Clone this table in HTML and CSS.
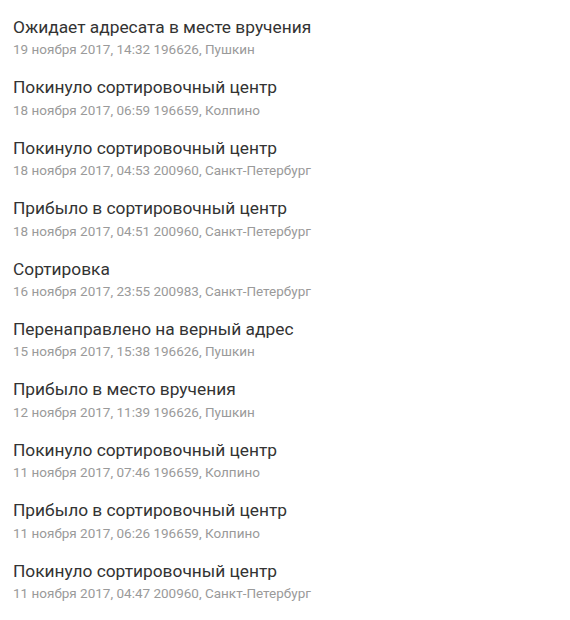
FILE: index.html
```html
<!DOCTYPE html>
<html lang="ru">
<head>
<meta charset="utf-8">
<link rel="stylesheet" href="styles.css">
</head>
<body>
<ul class="history">
  <li class="event"><div class="title">Ожидает адресата в месте вручения</div><div class="meta">19 ноября 2017, 14:32 196626, Пушкин</div></li>
  <li class="event"><div class="title">Покинуло сортировочный центр</div><div class="meta">18 ноября 2017, 06:59 196659, Колпино</div></li>
  <li class="event"><div class="title">Покинуло сортировочный центр</div><div class="meta">18 ноября 2017, 04:53 200960, Санкт-Петербург</div></li>
  <li class="event"><div class="title">Прибыло в сортировочный центр</div><div class="meta">18 ноября 2017, 04:51 200960, Санкт-Петербург</div></li>
  <li class="event"><div class="title">Сортировка</div><div class="meta">16 ноября 2017, 23:55 200983, Санкт-Петербург</div></li>
  <li class="event"><div class="title">Перенаправлено на верный адрес</div><div class="meta">15 ноября 2017, 15:38 196626, Пушкин</div></li>
  <li class="event"><div class="title">Прибыло в место вручения</div><div class="meta">12 ноября 2017, 11:39 196626, Пушкин</div></li>
  <li class="event"><div class="title">Покинуло сортировочный центр</div><div class="meta">11 ноября 2017, 07:46 196659, Колпино</div></li>
  <li class="event"><div class="title">Прибыло в сортировочный центр</div><div class="meta">11 ноября 2017, 06:26 196659, Колпино</div></li>
  <li class="event"><div class="title">Покинуло сортировочный центр</div><div class="meta">11 ноября 2017, 04:47 200960, Санкт-Петербург</div></li>
</ul>
</body>
</html>
```
FILE: styles.css
```css
html, body {
  margin: 0;
  padding: 0;
  background: #fff;
}
body {
  font-family: Roboto, "Noto Sans", sans-serif;
}
.history {
  list-style: none;
  margin: 0;
  padding: 8px 0;
}
.event {
  padding: 9px 13px;
}
.title {
  font-size: 13pt;
  line-height: 20.4px;
  color: #333;
}
.meta {
  margin-top: 2px;
  font-size: 13.5px;
  line-height: 20px;
  color: #9a9a9a;
}
```
